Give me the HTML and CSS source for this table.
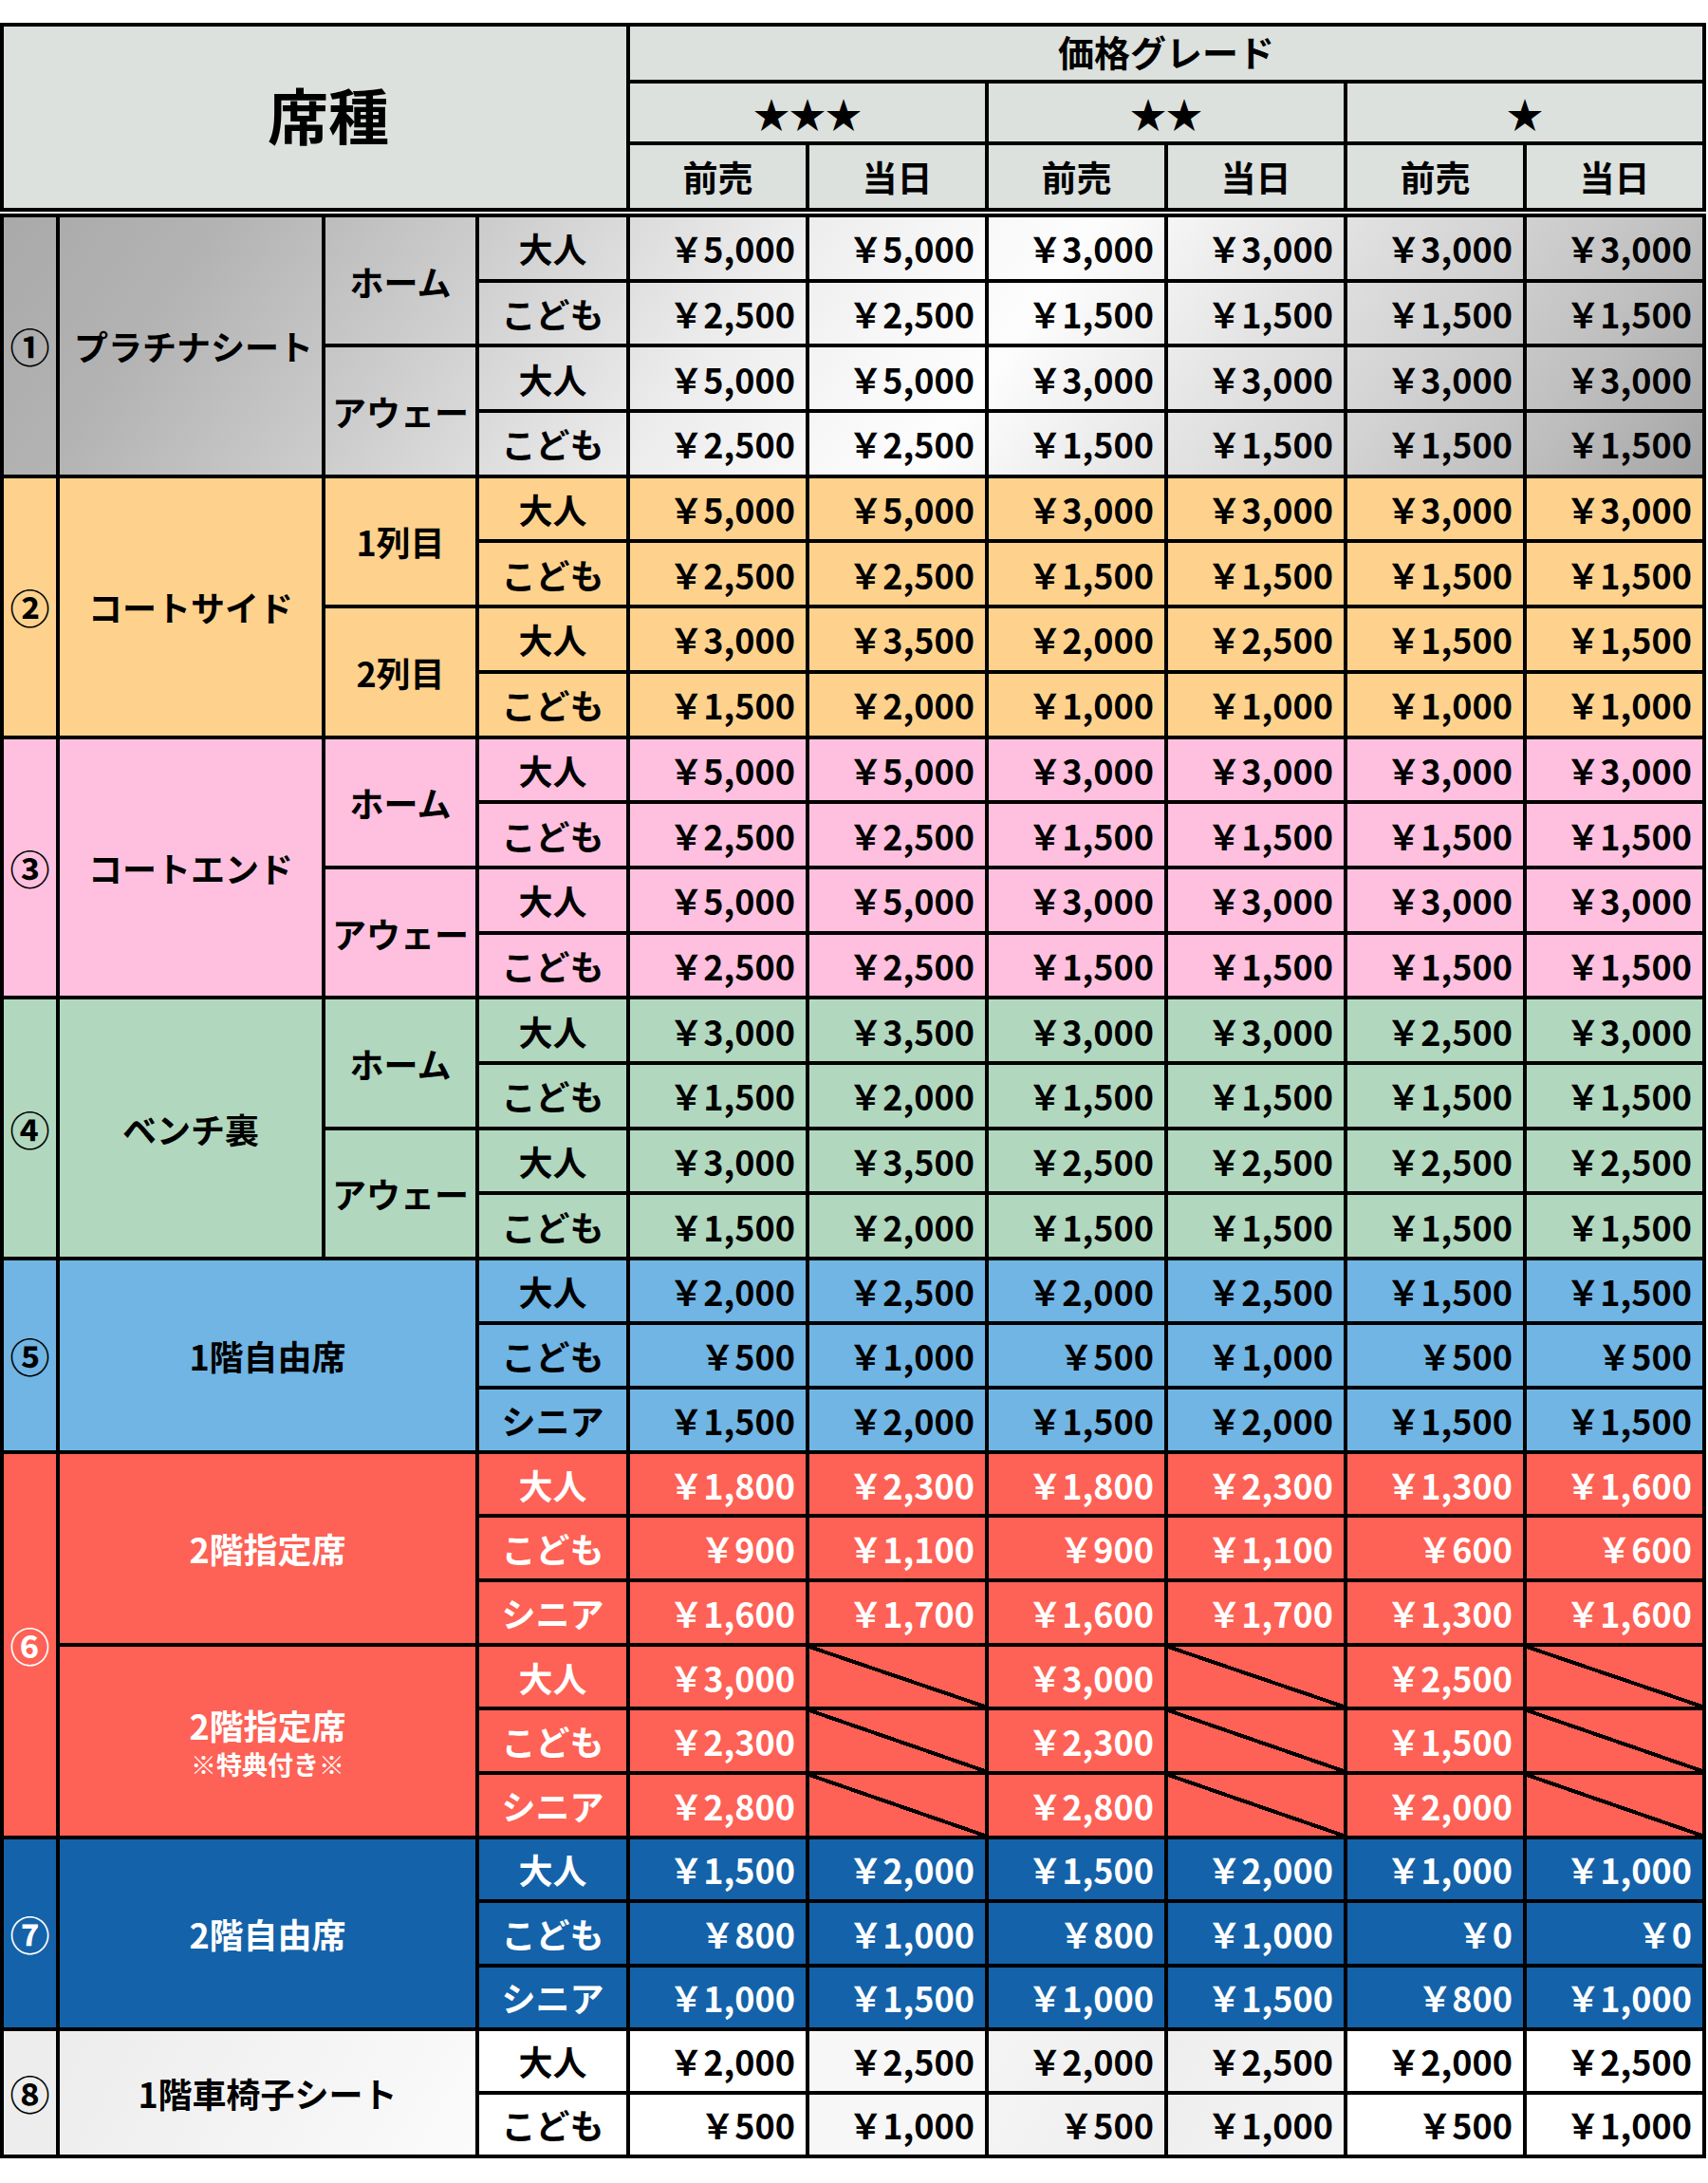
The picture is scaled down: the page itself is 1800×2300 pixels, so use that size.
FILE: index.html
```html
<!DOCTYPE html>
<html lang="ja">
<head>
<meta charset="utf-8">
<title>席種 価格グレード</title>
<link rel="stylesheet" href="styles.css">
</head>
<body>
<div class="sheet">
  <div class="grid head">
    <div class="c hd title s4 r3">席種</div>
    <div class="c hd grade s6">価格グレード</div>
    <div class="c hd s2 star">★★★</div>
    <div class="c hd s2 star">★★</div>
    <div class="c hd s2 star">★</div>
    <div class="c hd">前売</div><div class="c hd">当日</div>
    <div class="c hd">前売</div><div class="c hd">当日</div>
    <div class="c hd">前売</div><div class="c hd">当日</div>
  </div>

  <div class="grid body">
    <div class="sec plat">
      <div class="c num r4">①</div>
      <div class="c name r4">プラチナシート</div>
      <div class="c sub r2">ホーム</div>
      <div class="c type">大人</div>
      <div class="c p">￥5,000</div><div class="c p">￥5,000</div><div class="c p">￥3,000</div><div class="c p">￥3,000</div><div class="c p">￥3,000</div><div class="c p">￥3,000</div>
      <div class="c type">こども</div>
      <div class="c p">￥2,500</div><div class="c p">￥2,500</div><div class="c p">￥1,500</div><div class="c p">￥1,500</div><div class="c p">￥1,500</div><div class="c p">￥1,500</div>
      <div class="c sub r2">アウェー</div>
      <div class="c type">大人</div>
      <div class="c p">￥5,000</div><div class="c p">￥5,000</div><div class="c p">￥3,000</div><div class="c p">￥3,000</div><div class="c p">￥3,000</div><div class="c p">￥3,000</div>
      <div class="c type">こども</div>
      <div class="c p">￥2,500</div><div class="c p">￥2,500</div><div class="c p">￥1,500</div><div class="c p">￥1,500</div><div class="c p">￥1,500</div><div class="c p">￥1,500</div>
    </div>

    <div class="sec org">
      <div class="c num r4">②</div>
      <div class="c name r4">コートサイド</div>
      <div class="c sub r2">1列目</div>
      <div class="c type">大人</div>
      <div class="c p">￥5,000</div><div class="c p">￥5,000</div><div class="c p">￥3,000</div><div class="c p">￥3,000</div><div class="c p">￥3,000</div><div class="c p">￥3,000</div>
      <div class="c type">こども</div>
      <div class="c p">￥2,500</div><div class="c p">￥2,500</div><div class="c p">￥1,500</div><div class="c p">￥1,500</div><div class="c p">￥1,500</div><div class="c p">￥1,500</div>
      <div class="c sub r2">2列目</div>
      <div class="c type">大人</div>
      <div class="c p">￥3,000</div><div class="c p">￥3,500</div><div class="c p">￥2,000</div><div class="c p">￥2,500</div><div class="c p">￥1,500</div><div class="c p">￥1,500</div>
      <div class="c type">こども</div>
      <div class="c p">￥1,500</div><div class="c p">￥2,000</div><div class="c p">￥1,000</div><div class="c p">￥1,000</div><div class="c p">￥1,000</div><div class="c p">￥1,000</div>
    </div>

    <div class="sec pnk">
      <div class="c num r4">③</div>
      <div class="c name r4">コートエンド</div>
      <div class="c sub r2">ホーム</div>
      <div class="c type">大人</div>
      <div class="c p">￥5,000</div><div class="c p">￥5,000</div><div class="c p">￥3,000</div><div class="c p">￥3,000</div><div class="c p">￥3,000</div><div class="c p">￥3,000</div>
      <div class="c type">こども</div>
      <div class="c p">￥2,500</div><div class="c p">￥2,500</div><div class="c p">￥1,500</div><div class="c p">￥1,500</div><div class="c p">￥1,500</div><div class="c p">￥1,500</div>
      <div class="c sub r2">アウェー</div>
      <div class="c type">大人</div>
      <div class="c p">￥5,000</div><div class="c p">￥5,000</div><div class="c p">￥3,000</div><div class="c p">￥3,000</div><div class="c p">￥3,000</div><div class="c p">￥3,000</div>
      <div class="c type">こども</div>
      <div class="c p">￥2,500</div><div class="c p">￥2,500</div><div class="c p">￥1,500</div><div class="c p">￥1,500</div><div class="c p">￥1,500</div><div class="c p">￥1,500</div>
    </div>

    <div class="sec grn">
      <div class="c num r4">④</div>
      <div class="c name r4">ベンチ裏</div>
      <div class="c sub r2">ホーム</div>
      <div class="c type">大人</div>
      <div class="c p">￥3,000</div><div class="c p">￥3,500</div><div class="c p">￥3,000</div><div class="c p">￥3,000</div><div class="c p">￥2,500</div><div class="c p">￥3,000</div>
      <div class="c type">こども</div>
      <div class="c p">￥1,500</div><div class="c p">￥2,000</div><div class="c p">￥1,500</div><div class="c p">￥1,500</div><div class="c p">￥1,500</div><div class="c p">￥1,500</div>
      <div class="c sub r2">アウェー</div>
      <div class="c type">大人</div>
      <div class="c p">￥3,000</div><div class="c p">￥3,500</div><div class="c p">￥2,500</div><div class="c p">￥2,500</div><div class="c p">￥2,500</div><div class="c p">￥2,500</div>
      <div class="c type">こども</div>
      <div class="c p">￥1,500</div><div class="c p">￥2,000</div><div class="c p">￥1,500</div><div class="c p">￥1,500</div><div class="c p">￥1,500</div><div class="c p">￥1,500</div>
    </div>

    <div class="sec blu">
      <div class="c num r3">⑤</div>
      <div class="c name s2 r3">1階自由席</div>
      <div class="c type">大人</div>
      <div class="c p">￥2,000</div><div class="c p">￥2,500</div><div class="c p">￥2,000</div><div class="c p">￥2,500</div><div class="c p">￥1,500</div><div class="c p">￥1,500</div>
      <div class="c type">こども</div>
      <div class="c p">￥500</div><div class="c p">￥1,000</div><div class="c p">￥500</div><div class="c p">￥1,000</div><div class="c p">￥500</div><div class="c p">￥500</div>
      <div class="c type">シニア</div>
      <div class="c p">￥1,500</div><div class="c p">￥2,000</div><div class="c p">￥1,500</div><div class="c p">￥2,000</div><div class="c p">￥1,500</div><div class="c p">￥1,500</div>
    </div>

    <div class="sec red">
      <div class="c num r6">⑥</div>
      <div class="c name s2 r3">2階指定席</div>
      <div class="c type">大人</div>
      <div class="c p">￥1,800</div><div class="c p">￥2,300</div><div class="c p">￥1,800</div><div class="c p">￥2,300</div><div class="c p">￥1,300</div><div class="c p">￥1,600</div>
      <div class="c type">こども</div>
      <div class="c p">￥900</div><div class="c p">￥1,100</div><div class="c p">￥900</div><div class="c p">￥1,100</div><div class="c p">￥600</div><div class="c p">￥600</div>
      <div class="c type">シニア</div>
      <div class="c p">￥1,600</div><div class="c p">￥1,700</div><div class="c p">￥1,600</div><div class="c p">￥1,700</div><div class="c p">￥1,300</div><div class="c p">￥1,600</div>
      <div class="c name s2 r3 stack"><span class="lead">2階指定席</span><span class="note">※特典付き※</span></div>
      <div class="c type">大人</div>
      <div class="c p">￥3,000</div><div class="c x"></div><div class="c p">￥3,000</div><div class="c x"></div><div class="c p">￥2,500</div><div class="c x"></div>
      <div class="c type">こども</div>
      <div class="c p">￥2,300</div><div class="c x"></div><div class="c p">￥2,300</div><div class="c x"></div><div class="c p">￥1,500</div><div class="c x"></div>
      <div class="c type">シニア</div>
      <div class="c p">￥2,800</div><div class="c x"></div><div class="c p">￥2,800</div><div class="c x"></div><div class="c p">￥2,000</div><div class="c x"></div>
    </div>

    <div class="sec nav">
      <div class="c num r3">⑦</div>
      <div class="c name s2 r3">2階自由席</div>
      <div class="c type">大人</div>
      <div class="c p">￥1,500</div><div class="c p">￥2,000</div><div class="c p">￥1,500</div><div class="c p">￥2,000</div><div class="c p">￥1,000</div><div class="c p">￥1,000</div>
      <div class="c type">こども</div>
      <div class="c p">￥800</div><div class="c p">￥1,000</div><div class="c p">￥800</div><div class="c p">￥1,000</div><div class="c p">￥0</div><div class="c p">￥0</div>
      <div class="c type">シニア</div>
      <div class="c p">￥1,000</div><div class="c p">￥1,500</div><div class="c p">￥1,000</div><div class="c p">￥1,500</div><div class="c p">￥800</div><div class="c p">￥1,000</div>
    </div>

    <div class="sec wht">
      <div class="c num r2">⑧</div>
      <div class="c name s2 r2">1階車椅子シート</div>
      <div class="c type">大人</div>
      <div class="c p g1">￥2,000</div><div class="c p g2">￥2,500</div><div class="c p g3">￥2,000</div><div class="c p g4">￥2,500</div><div class="c p">￥2,000</div><div class="c p">￥2,500</div>
      <div class="c type">こども</div>
      <div class="c p g1">￥500</div><div class="c p g2">￥1,000</div><div class="c p g3">￥500</div><div class="c p g4">￥1,000</div><div class="c p">￥500</div><div class="c p">￥1,000</div>
    </div>
  </div>
</div>
</body>
</html>
```

FILE: styles.css
```css
* { box-sizing: border-box; }

html, body {
  margin: 0;
  padding: 0;
  background: #ffffff;
}

body {
  font-family: "Noto Sans CJK JP", "Noto Sans", sans-serif;
  font-weight: 700;
  color: #000000;
}

.sheet {
  width: 1800px;
  padding-top: 24px;
}

.grid {
  display: grid;
  grid-template-columns: 55px 276px 158px 155px repeat(6, 185px);
  gap: 4px;
  padding: 4px;
  width: 1798px;
  background: #000000;
}

.head {
  grid-template-rows: 56px 61px 66px;
}

.body {
  margin-top: 2px;
  grid-template-rows: repeat(16, 64.7px) repeat(3, 63.9px) repeat(6, 63.7px) repeat(3, 63.4px) repeat(2, 62.8px);
}

.sec { display: contents; }

.c {
  display: flex;
  align-items: center;
  justify-content: center;
  line-height: 1;
  font-size: 36px;
  white-space: nowrap;
}

.s2 { grid-column: span 2; }
.s4 { grid-column: span 4; }
.s6 { grid-column: span 6; }
.r2 { grid-row: span 2; }
.r3 { grid-row: span 3; }
.r4 { grid-row: span 4; }
.r6 { grid-row: span 6; }

.hd { background: #dce1dd; font-size: 37px; }
.title {
  font-size: 64px;
  padding-left: 28px;
  padding-bottom: 10px;
}
.grade {
  font-size: 38px;
  padding-bottom: 5px;
}
.star { font-size: 38px; }

.num { font-size: 42px; }
.name { font-size: 36px; }
.sub { font-size: 36px; }
.type { font-size: 36px; }

.plat .name { padding-left: 6px; }

.p {
  justify-content: flex-end;
  padding-right: 11px;
  font-size: 36px;
}

.stack {
  flex-direction: column;
  gap: 10px;
  padding-top: 2px;
}

.lead { font-size: 36px; }
.note { font-size: 27px; }

.plat .c {
  background-image: linear-gradient(125deg,
    #a9a9a9 0%, #b3b3b3 12%, #cccccc 26%, #dcdcdc 34%, #ececec 42%,
    #f8f8f8 52%, #fdfdfd 58%, #e4e4e4 70%, #d2d2d2 80%, #bdbdbd 90%, #a3a3a3 100%);
  background-attachment: fixed;
  background-size: 1800px 290px;
  background-position: 0 225px;
  background-repeat: no-repeat;
}

.org .c { background: #fed28d; }
.pnk .c { background: #fec0de; }
.grn .c { background: #b1d8be; }
.blu .c { background: #70b5e4; }
.red .c { background: #fe6155; color: #ffffff; }
.nav .c { background: #1462a9; color: #ffffff; }

.red .x {
  background-image: linear-gradient(to top right,
    transparent calc(50% - 2px), #000000 calc(50% - 2px),
    #000000 calc(50% + 2px), transparent calc(50% + 2px));
}

.wht .c { background: #ffffff; }
.wht .num { background: #ededed; }
.wht .name { background: linear-gradient(120deg, #ececec, #fbfbfb); }
.wht .g1 { background: #ffffff; }
.wht .g2 { background: #f7f7f7; }
.wht .g3 { background: linear-gradient(120deg, #f4f4f4, #eeeeee); }
.wht .g4 { background: linear-gradient(120deg, #eeeeee, #f4f4f4); }
```
